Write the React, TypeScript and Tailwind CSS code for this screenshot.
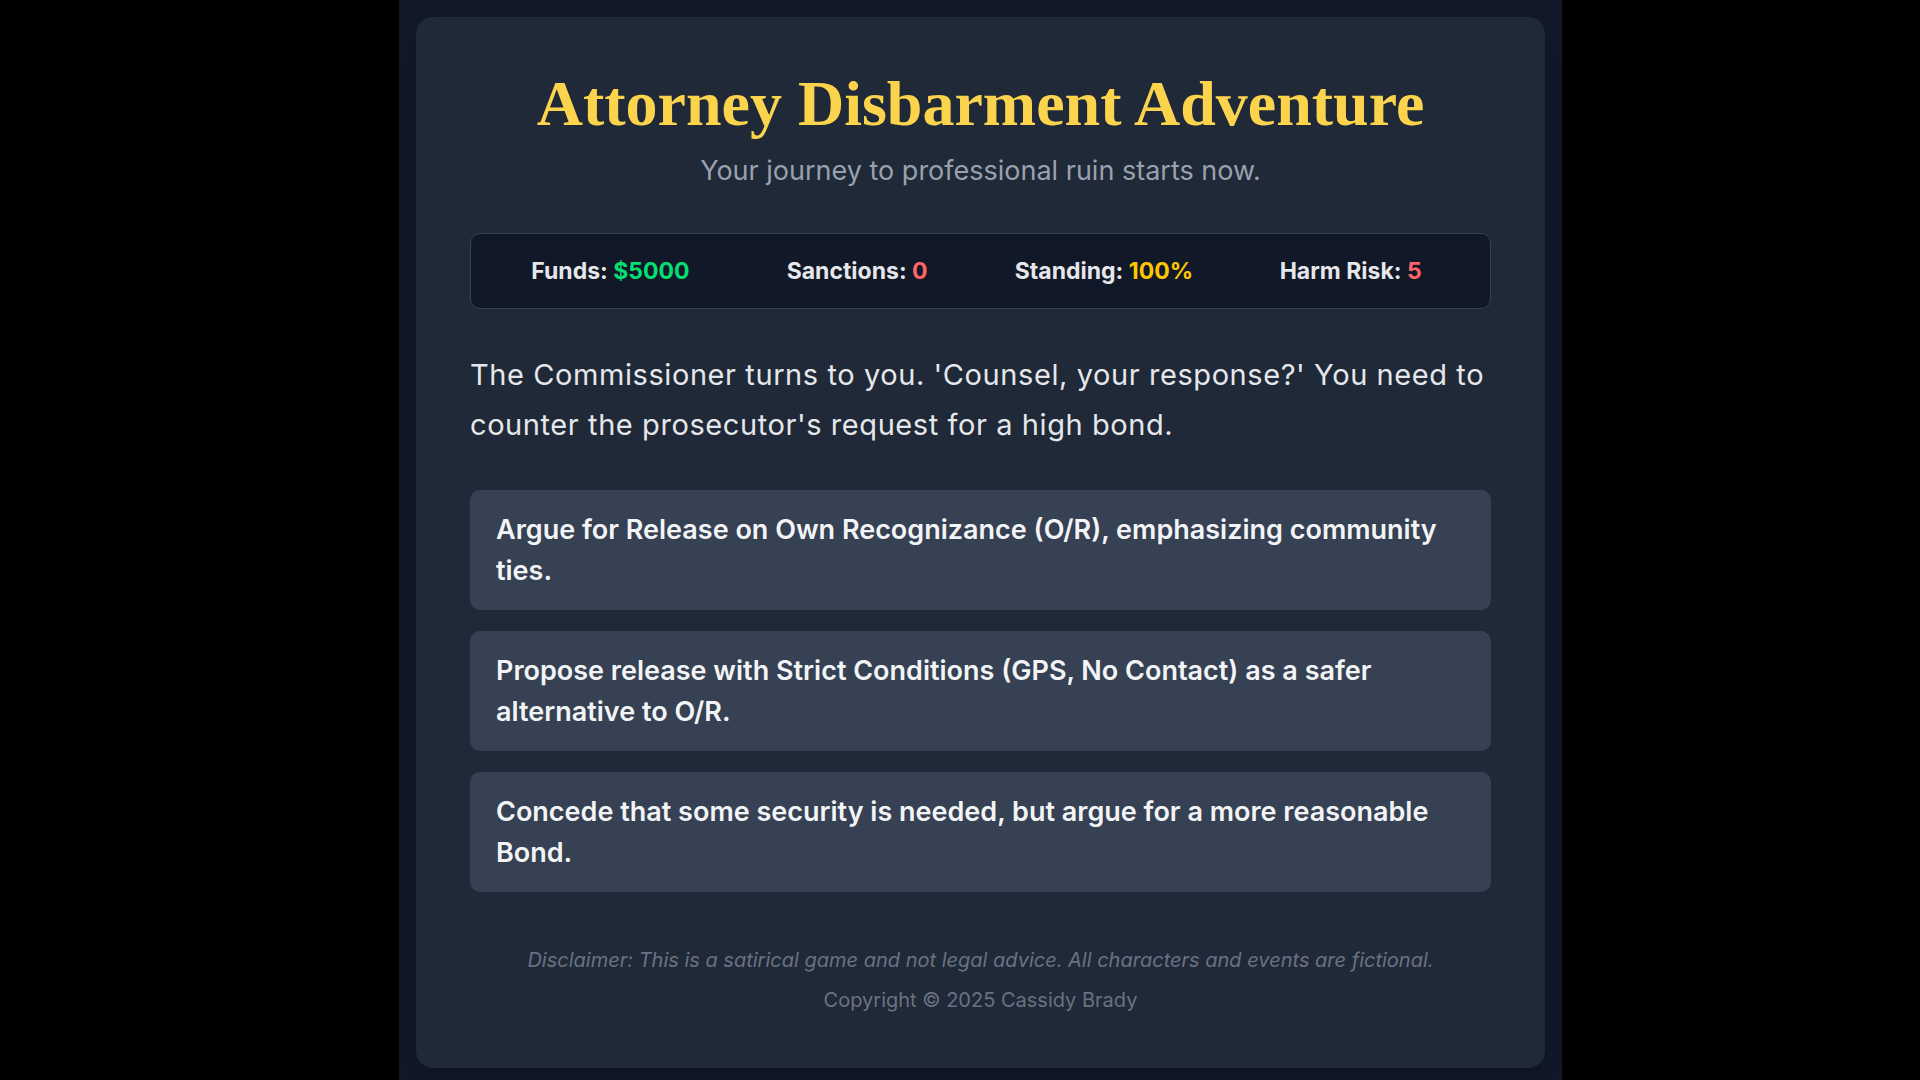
import React from 'react';

const stats = [
  { label: 'Funds', value: '$5000', color: 'text-green-400' },
  { label: 'Sanctions', value: '0', color: 'text-red-400' },
  { label: 'Standing', value: '100%', color: 'text-yellow-400' },
  { label: 'Harm Risk', value: '5', color: 'text-red-400' },
];

const choices = [
  'Argue for Release on Own Recognizance (O/R), emphasizing community ties.',
  'Propose release with Strict Conditions (GPS, No Contact) as a safer alternative to O/R.',
  'Concede that some security is needed, but argue for a more reasonable Bond.',
];

export default function App() {
  return (
    <div className="flex min-h-screen bg-black font-['Inter',sans-serif]">
      <div className="w-[399px] shrink-0" />
      <div className="w-[1163px] shrink-0 bg-[#111827] p-[17px]">
        <div className="rounded-[17px] bg-[#1f2937] px-[54px] pt-[54px] pb-[54px] shadow-xl">
          {/* Header */}
          <h1 className="text-center font-['Liberation_Serif',serif] text-[64px] font-bold leading-[66px] text-[#fcd34d]">
            Attorney Disbarment Adventure
          </h1>
          <p className="mt-[18px] text-center text-[27px] leading-[32px] text-gray-400">
            Your journey to professional ruin starts now.
          </p>

          {/* Stats */}
          <div className="mt-[46px] grid h-[76px] grid-cols-4 items-center rounded-[10px] border border-gray-700 bg-[#111827] px-4">
            {stats.map((s) => (
              <div key={s.label} className="text-center text-[23px] font-bold text-gray-200">
                {s.label}: <span className={s.color}>{s.value}</span>
              </div>
            ))}
          </div>

          {/* Narrative */}
          <p className="mt-[41px] text-[29px] leading-[50px] tracking-[0.02em] text-gray-200">
            The Commissioner turns to you. 'Counsel, your response?' You need to counter the prosecutor's request for a high bond.
          </p>

          {/* Choices */}
          <div className="mt-[40px] flex flex-col gap-[21px]">
            {choices.map((c) => (
              <button
                key={c}
                className="h-[120px] rounded-[10px] bg-gray-700 px-[26px] text-left text-[27px] font-semibold leading-[41px] text-gray-100 hover:bg-gray-600"
              >
                {c}
              </button>
            ))}
          </div>

          {/* Footer */}
          <div className="mt-[54px] text-center text-[20px] leading-[28px] text-gray-500">
            <p className="italic">
              Disclaimer: This is a satirical game and not legal advice. All characters and events are fictional.
            </p>
            <p className="mt-[12px]">Copyright © 2025 Cassidy Brady</p>
          </div>
        </div>
      </div>
    </div>
  );
}
